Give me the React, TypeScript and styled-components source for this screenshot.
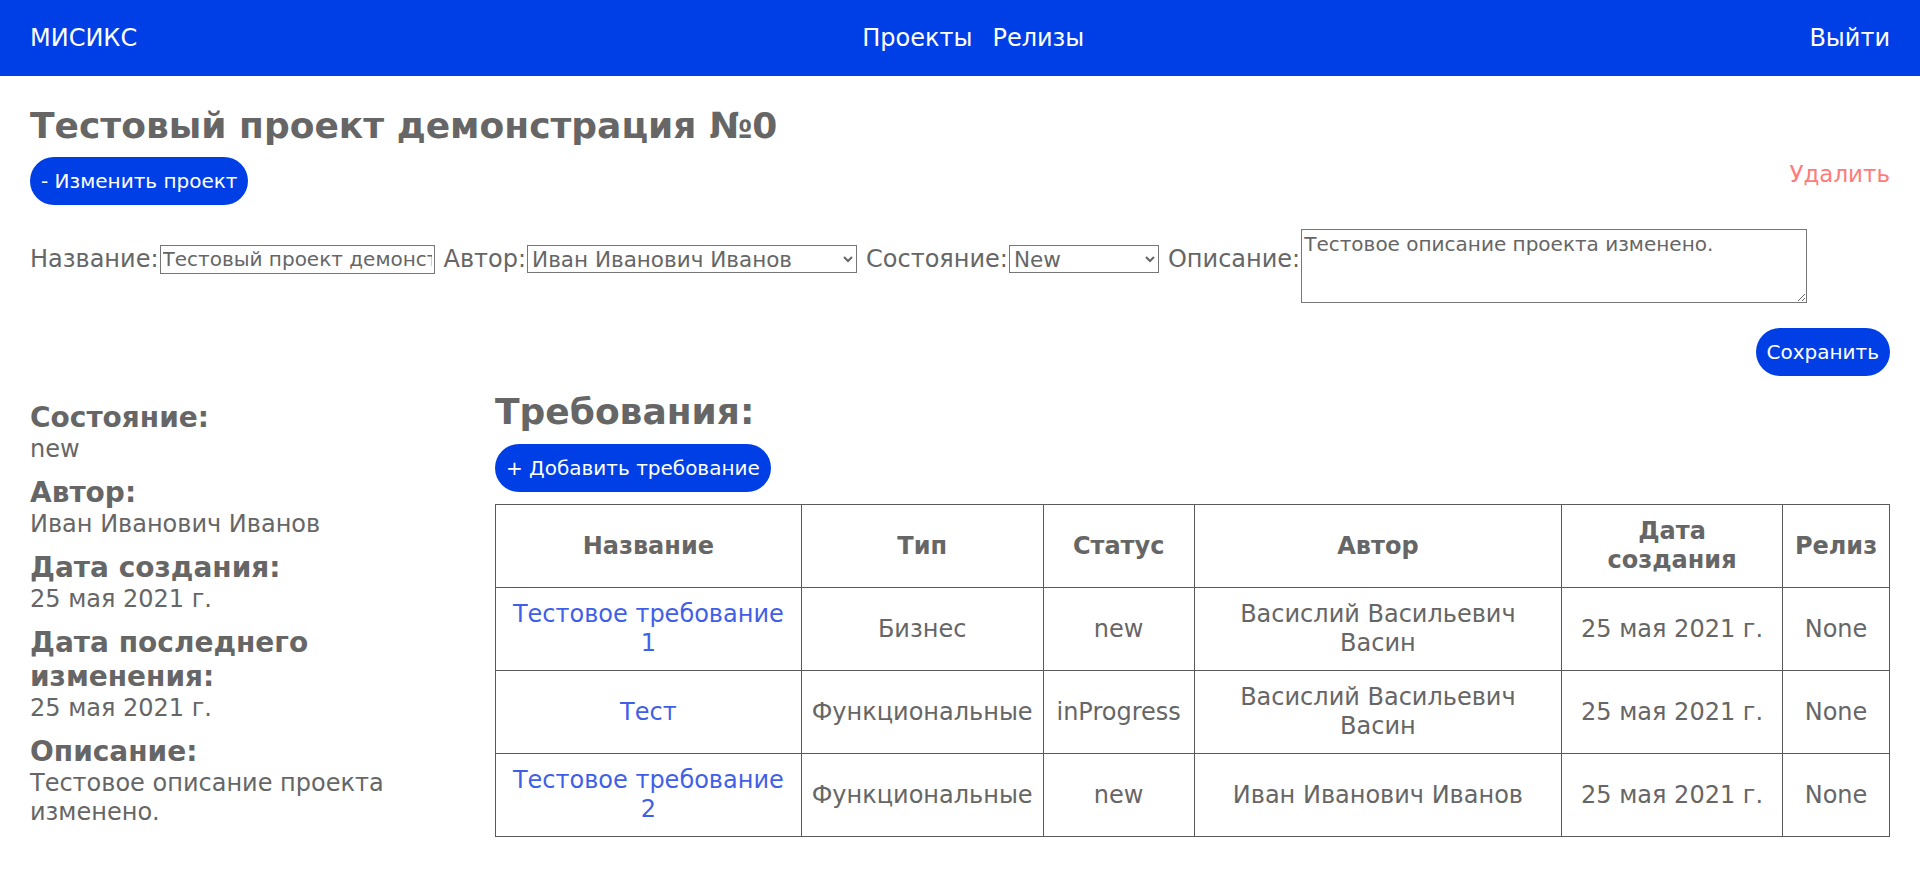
import React from 'react';
import styled, { createGlobalStyle } from 'styled-components';

const GlobalStyle = createGlobalStyle`
  body {
    margin: 0;
    font-family: "DejaVu Sans", Verdana, sans-serif;
    color: #666;
    background: #fff;
  }
`

const Header = styled.header`
  display: flex;
  justify-content: space-between;
  align-items: center;
  height: 76px;
  padding: 0 30px;
  background: #003fe6;
  color: #fff;
  font-size: 24px;
`

const Brand = styled.span`
  color: #fff;
`

const NavLinks = styled.nav`
  display: flex;
  gap: 20px;
`

const NavLink = styled.a`
  color: #fff;
  text-decoration: none;
`

const Page = styled.main`
  padding: 0 30px 40px;
`

const Title = styled.h1`
  margin: 28px 0 10px;
  font-size: 36px;
  line-height: 1.2;
  font-weight: bold;
  color: #666;
`

const Toolbar = styled.div`
  display: flex;
  justify-content: space-between;
  align-items: flex-start;
`

const PillButton = styled.button`
  border: none;
  border-radius: 24px;
  padding: 12px 11px;
  background: #003fe6;
  color: #fff;
  font-family: inherit;
  font-size: 20px;
  line-height: 24px;
  cursor: pointer;
`

const DeleteLink = styled.a`
  margin-top: 4px;
  color: #ff7b7b;
  font-size: 23px;
  line-height: 1.2;
  text-decoration: none;
`

const FormRow = styled.form`
  display: flex;
  align-items: center;
  gap: 9px;
  margin-top: 10px;
  font-size: 24px;
  line-height: 29px;
`

const Field = styled.label`
  display: flex;
  align-items: center;
  gap: 1px;
`

const TextInput = styled.input`
  box-sizing: border-box;
  width: 275px;
  height: 29px;
  padding: 1px 2px;
  border: 1px solid #767676;
  font-family: inherit;
  font-size: 20px;
  color: #666;
`

const Select = styled.select<{ $w: number }>`
  box-sizing: border-box;
  width: ${(p) => p.$w}px;
  height: 28px;
  border: 1px solid #767676;
  border-radius: 0;
  background: #fff;
  font-family: inherit;
  font-size: 21.5px;
  color: #666;
`

const TextArea = styled.textarea`
  box-sizing: border-box;
  width: 506px;
  height: 74px;
  margin-top: 14px;
  padding: 2px;
  border: 1px solid #767676;
  font-family: inherit;
  font-size: 20px;
  color: #666;
`

const SaveRow = styled.div`
  display: flex;
  justify-content: flex-end;
  margin-top: 25px;
`

const Columns = styled.div`
  display: flex;
  align-items: flex-start;
  margin-top: 14px;
`

const Sidebar = styled.aside`
  width: 25%;
  flex-shrink: 0;
  padding-top: 11px;
`

const InfoLabel = styled.h3`
  margin: 0;
  font-size: 28px;
  line-height: 34px;
  font-weight: bold;
`

const InfoValue = styled.p`
  margin: 0 0 12px;
  font-size: 24px;
  line-height: 29px;
`

const MainColumn = styled.section`
  flex: 1;
`

const SectionTitle = styled.h2`
  margin: 0 0 11px;
  font-size: 36px;
  line-height: 1.2;
  font-weight: bold;
`

const Table = styled.table`
  width: 100%;
  margin-top: 12px;
  border-collapse: collapse;
  font-size: 24px;
  line-height: 29px;
`

const Col = styled.col<{ $w: number }>`
  width: ${(p) => p.$w}px;
`

const HeadCell = styled.th`
  border: 1px solid #5a5a5a;
  padding: 12px 10px;
  font-weight: bold;
  text-align: center;
  vertical-align: middle;
`

const Cell = styled.td`
  border: 1px solid #5a5a5a;
  padding: 12px 10px;
  text-align: center;
  vertical-align: middle;
`

const ReqLink = styled.a`
  color: #3f5fe8;
  text-decoration: none;
`

interface IRequirement {
  name: string;
  type: string;
  status: string;
  author: string;
  created: string;
  release: string;
}

const requirements: IRequirement[] = [
  { name: 'Тестовое требование 1', type: 'Бизнес', status: 'new', author: 'Васислий Васильевич Васин', created: '25 мая 2021 г.', release: 'None' },
  { name: 'Тест', type: 'Функциональные', status: 'inProgress', author: 'Васислий Васильевич Васин', created: '25 мая 2021 г.', release: 'None' },
  { name: 'Тестовое требование 2', type: 'Функциональные', status: 'new', author: 'Иван Иванович Иванов', created: '25 мая 2021 г.', release: 'None' },
]

const colWidths = [306, 241, 151, 368, 221, 107]

const App = () => {
  return (
    <>
      <GlobalStyle />
      <Header>
        <Brand>МИСИКС</Brand>
        <NavLinks>
          <NavLink href="#">Проекты</NavLink>
          <NavLink href="#">Релизы</NavLink>
        </NavLinks>
        <NavLink href="#">Выйти</NavLink>
      </Header>
      <Page>
        <Title>Тестовый проект демонстрация №0</Title>
        <Toolbar>
          <PillButton>- Изменить проект</PillButton>
          <DeleteLink href="#">Удалить</DeleteLink>
        </Toolbar>
        <FormRow onSubmit={(e) => e.preventDefault()}>
          <Field>
            Название:<TextInput defaultValue="Тестовый проект демонстрация №0" />
          </Field>
          <Field>
            Автор:<Select $w={330} defaultValue="1">
              <option value="1">Иван Иванович Иванов</option>
              <option value="2">Васислий Васильевич Васин</option>
            </Select>
          </Field>
          <Field>
            Состояние:<Select $w={150} defaultValue="new">
              <option value="new">New</option>
              <option value="inProgress">InProgress</option>
            </Select>
          </Field>
          <Field>
            Описание:<TextArea defaultValue="Тестовое описание проекта изменено." />
          </Field>
        </FormRow>
        <SaveRow>
          <PillButton>Сохранить</PillButton>
        </SaveRow>
        <Columns>
          <Sidebar>
            <InfoLabel>Состояние:</InfoLabel>
            <InfoValue>new</InfoValue>
            <InfoLabel>Автор:</InfoLabel>
            <InfoValue>Иван Иванович Иванов</InfoValue>
            <InfoLabel>Дата создания:</InfoLabel>
            <InfoValue>25 мая 2021 г.</InfoValue>
            <InfoLabel>Дата последнего изменения:</InfoLabel>
            <InfoValue>25 мая 2021 г.</InfoValue>
            <InfoLabel>Описание:</InfoLabel>
            <InfoValue>Тестовое описание проекта изменено.</InfoValue>
          </Sidebar>
          <MainColumn>
            <SectionTitle>Требования:</SectionTitle>
            <PillButton>+ Добавить требование</PillButton>
            <Table>
              <colgroup>
                {colWidths.map((w, i) => <Col key={i} $w={w} />)}
              </colgroup>
              <thead>
                <tr>
                  <HeadCell>Название</HeadCell>
                  <HeadCell>Тип</HeadCell>
                  <HeadCell>Статус</HeadCell>
                  <HeadCell>Автор</HeadCell>
                  <HeadCell>Дата создания</HeadCell>
                  <HeadCell>Релиз</HeadCell>
                </tr>
              </thead>
              <tbody>
                {requirements.map((r) => (
                  <tr key={r.name}>
                    <Cell><ReqLink href="#">{r.name}</ReqLink></Cell>
                    <Cell>{r.type}</Cell>
                    <Cell>{r.status}</Cell>
                    <Cell>{r.author}</Cell>
                    <Cell>{r.created}</Cell>
                    <Cell>{r.release}</Cell>
                  </tr>
                ))}
              </tbody>
            </Table>
          </MainColumn>
        </Columns>
      </Page>
    </>
  )
}

export default App;
